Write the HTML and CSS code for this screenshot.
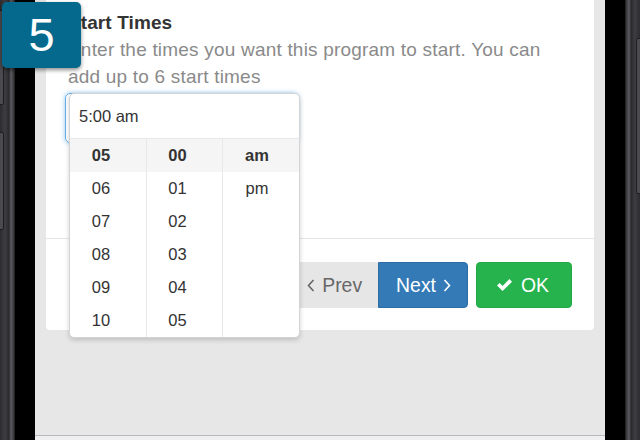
FILE: index.html
```html
<!DOCTYPE html>
<html lang="en">
<head>
    <meta charset="UTF-8">
    <meta name="viewport" content="width=device-width, initial-scale=1.0">
    <title>Start Times</title>
    <link rel="stylesheet" href="styles.css">
</head>
<body>
    <div class="step-badge">5</div>

    <div class="phone">
        <div class="frame frame-left">
            <span class="side-btn side-btn-a"></span>
            <span class="side-btn side-btn-b"></span>
        </div>
        <div class="bezel"></div>

        <div class="screen">
            <div class="card">
                <div class="card-body">
                    <h2 class="title">Start Times</h2>
                    <p class="help">Enter the times you want this program to start. You can add up to 6 start times</p>

                    <div class="time-field">
                        <div class="time-input"></div>

                        <div class="time-picker">
                            <div class="picker-value">5:00 am</div>
                            <div class="picker-cols">
                                <ul class="picker-col col-scroll">
                                    <li class="selected">05</li>
                                    <li>06</li>
                                    <li>07</li>
                                    <li>08</li>
                                    <li>09</li>
                                    <li>10</li>
                                </ul>
                                <ul class="picker-col col-scroll">
                                    <li class="selected">00</li>
                                    <li>01</li>
                                    <li>02</li>
                                    <li>03</li>
                                    <li>04</li>
                                    <li>05</li>
                                </ul>
                                <ul class="picker-col col-ampm">
                                    <li class="selected">am</li>
                                    <li>pm</li>
                                </ul>
                            </div>
                        </div>
                    </div>
                </div>

                <div class="card-footer">
                    <div class="btn-group">
                        <button class="btn btn-prev">
                            <svg width="8" height="13" viewBox="0 0 8 13"><polyline points="6.5,1 1.5,6.5 6.5,12" fill="none" stroke="currentColor" stroke-width="1.6"/></svg>
                            Prev
                        </button>
                        <button class="btn btn-next">
                            Next
                            <svg width="8" height="13" viewBox="0 0 8 13"><polyline points="1.5,1 6.5,6.5 1.5,12" fill="none" stroke="currentColor" stroke-width="1.6"/></svg>
                        </button>
                    </div>
                    <button class="btn btn-ok">
                        <svg width="17" height="14" viewBox="0 0 17 14"><path d="M1 7.5 L3.6 4.9 L6.6 7.9 L13.4 1.1 L16 3.7 L6.6 13.1 Z" fill="currentColor"/></svg>
                        OK
                    </button>
                </div>
            </div>

            <div class="tabbar"></div>
        </div>

        <div class="bezel"></div>
        <div class="frame frame-right">
            <span class="side-btn side-btn-c"></span>
        </div>
    </div>
</body>
</html>
```

FILE: styles.css
```css
body {
    margin: 0;
    width: 640px;
    height: 440px;
    overflow: hidden;
    font-family: 'Liberation Sans', Arial, sans-serif;
    background: #000;
    position: relative;
}

.phone {
    display: flex;
    height: 440px;
}

.frame {
    width: 15px;
    position: relative;
}

.frame-left {
    background: linear-gradient(90deg, #2c2c30 0, #3d3d42 5px, #2a2a2e 9px, #5b5b61 11px, #404045 13px, #1c1c1e 15px);
}

.frame-right {
    background: linear-gradient(90deg, #1c1c1e 0, #404045 2px, #5b5b61 4px, #2a2a2e 6px, #3d3d42 10px, #2c2c30 15px);
}

.side-btn {
    position: absolute;
    width: 4px;
    background: #4a4a50;
    border: 1px solid #1e1e22;
    border-radius: 2px;
}

.side-btn-a {
    left: -2px;
    top: 10px;
    height: 93px;
}

.side-btn-b {
    left: -2px;
    top: 132px;
    height: 96px;
}

.side-btn-c {
    right: -2px;
    top: 38px;
    height: 154px;
}

.bezel {
    width: 20px;
    background: #000;
}

.screen {
    width: 570px;
    background: #e7e7e7;
    display: flex;
    flex-direction: column;
}

.card {
    margin: 0 11px;
    background: #fff;
    border-radius: 0 0 4px 4px;
}

.card-body {
    padding: 9px 22px 95px;
}

.title {
    margin: 0;
    font-size: 19px;
    line-height: 27px;
    font-weight: bold;
    color: #333;
    letter-spacing: 0.1px;
}

.help {
    margin: 0;
    max-width: 492px;
    font-size: 19px;
    line-height: 27px;
    letter-spacing: 0.2px;
    color: #8a8a8a;
}

.time-field {
    position: relative;
    margin: 3px 0 0 -3px;
    width: 233px;
    height: 50px;
}

.time-input {
    height: 48px;
    border: 1px solid #66afe9;
    border-radius: 5px;
    box-shadow: 0 0 5px rgba(102, 175, 233, 0.7);
}

/* dropdown that sits over the input */
.time-picker {
    position: absolute;
    left: 4px;
    top: 0;
    width: 229px;
    background: #fff;
    border: 1px solid #d4d4d4;
    border-radius: 5px;
    box-shadow: 0 2px 5px rgba(0, 0, 0, 0.18);
    z-index: 2;
}

.picker-value {
    height: 44px;
    line-height: 44px;
    padding-left: 9px;
    font-size: 16.5px;
    color: #333;
    border-bottom: 1px solid #e8e8e8;
}

.picker-cols {
    display: grid;
    grid-template-columns: 76px 76px 1fr;
}

.picker-col {
    list-style: none;
    margin: 0;
    padding: 0;
    height: 198px;
}

.picker-col + .picker-col {
    border-left: 1px solid #e8e8e8;
}

.picker-col li {
    height: 33px;
    line-height: 33px;
    text-align: center;
    font-size: 16.5px;
    color: #333;
}

.col-scroll li {
    padding-right: 14px;
}

.col-ampm li {
    padding-right: 8px;
}

.picker-col li.selected {
    background: #f5f5f5;
    font-weight: bold;
}

.card-footer {
    border-top: 1px solid #e5e5e5;
    padding: 23px 22px 22px;
    display: flex;
    justify-content: flex-end;
    gap: 8px;
}

.btn-group {
    display: flex;
}

.btn {
    height: 46px;
    display: flex;
    align-items: center;
    gap: 7px;
    font-family: inherit;
    font-size: 19.4px;
    border: 1px solid transparent;
    border-radius: 4px;
    cursor: pointer;
}

.btn-prev {
    padding: 0 15px 0 15px;
    background: #e6e6e6;
    border-color: #e6e6e6;
    color: #666;
    border-radius: 4px 0 0 4px;
}

.btn-next {
    padding: 0 16px 0 17px;
    background: #337ab7;
    border-color: #2e6da4;
    color: #fff;
    border-radius: 0 4px 4px 0;
}

.btn-ok {
    padding: 0 22px 0 19px;
    background: #26b34d;
    border-color: #24a949;
    color: #fff;
    gap: 8px;
}

.tabbar {
    margin-top: auto;
    height: 4px;
    background: #efeff1;
    border-top: 1px solid #b8b8bc;
}

.step-badge {
    position: absolute;
    left: 2px;
    top: 2px;
    width: 79px;
    height: 66px;
    background: #05698d;
    border-radius: 5px;
    box-shadow: 0 2px 4px rgba(0, 0, 0, 0.45);
    color: #fff;
    font-size: 47px;
    line-height: 66px;
    text-align: center;
    z-index: 5;
}
```
